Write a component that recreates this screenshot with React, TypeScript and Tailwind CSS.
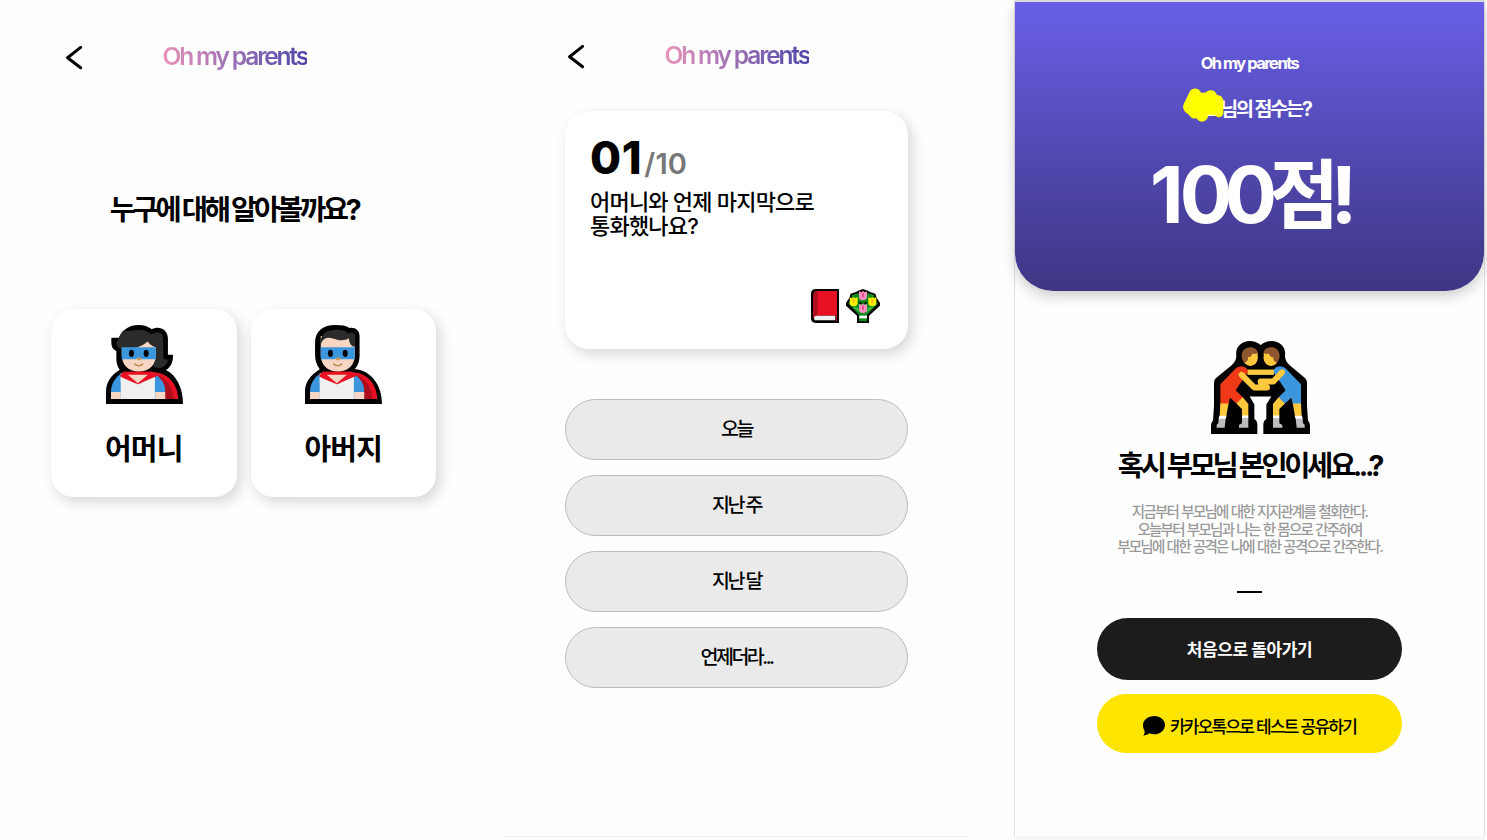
import type { ReactNode } from "react";

function BackIcon() {
  return (
    <svg className="h-6 w-[18px]" viewBox="0 0 18 24" fill="none" stroke="#000" strokeWidth="3" strokeLinecap="round" strokeLinejoin="round">
      <path d="M15.6 1.4 2.6 11.7 15.6 21.8" />
    </svg>
  );
}

function HeroBody() {
  return (
    <g>
      <path fill="#3b96dd" d="M63 267v-22c0-24 12-43 33-56h96c20 12 34 30 34 56v22z" />
      <path fill="#f7d7c4" d="M63 246h29v21H63zM195 246h31v21h-31z" />
      <path fill="#f0f0f0" d="M92 190h102v77H92z" />
      <path fill="#e81123" d="M188 186c42 2 74 33 76 81h-38v-22c0-24-12-40-38-59z" />
      <path fill="#ae0d1b" d="M200 194c28 12 49 36 50 73h-24v-22c0-22-9-36-26-51z" />
      <path fill="#e81123" d="M103 185h82l16 11-9 9-49 18-43-16-10-9z" />
      <path fill="#f0f0f0" d="m92 201 50 22 52-24v20H92z" />
      <path fill="#e81123" d="M100 185h88l12 13-57 25-53-27z" />
      <path fill="#f7d7c4" d="M113 194h60l-30 26z" />
    </g>
  );
}

function HeroFace() {
  return (
    <g>
      <path fill="#3b96dd" d="M95 112h102v36h-38c-5 0-5-5-12-5s-8 5-13 5H95z" />
      <ellipse cx="124" cy="130" rx="7.5" ry="11" />
      <ellipse cx="168" cy="130" rx="7.5" ry="11" />
      <path fill="#c9965c" d="M139 146c2-5 14-5 16 0-3 6-13 6-16 0z" />
      <path d="M134 162c6 7 17 7 23 0" fill="none" stroke="#c08c55" strokeWidth="5" strokeLinecap="round" />
    </g>
  );
}

function MotherIcon() {
  return (
    <svg className="ml-px h-[79px] w-[77px]" viewBox="48 45 230 237" preserveAspectRatio="none">
      <path d="M48 282v-37c0-27 14-49 41-66-6-8-10-20-10-30v-26c-11-4-15-14-15-26V83h22c12-25 33-38 59-38 16 0 29 4 40 13 20-12 48 0 48 28v48h15v6c0 17-8 33-21 40 32 16 51 54 51 102z" />
      <path fill="#2b2b2b" d="M79 98h17c8-27 26-39 50-39 17 0 30 6 38 16 8-13 35-12 35 11v54c0 6 4 9 14 9-2 15-14 25-28 25-11 0-16-5-20-9L95 118z" />
      <path fill="#f7d7c4" d="M95 112h10c25 1 51-7 68-18 4 8 13 14 24 17v22c0 31-18 52-51 52s-51-21-51-52z" />
      <path fill="#2b2b2b" d="M79 98c2 13 10 20 25 20 28 0 52-8 69-24 5 9 13 15 24 18l8-26-40-24H98z" />
      <HeroFace />
      <HeroBody />
    </svg>
  );
}

function FatherIcon() {
  return (
    <svg className="ml-px h-[79px] w-[77px]" viewBox="48 45 230 237" preserveAspectRatio="none">
      <path d="M48 282v-37c0-27 14-48 44-67-9-13-14-26-14-45V98c0-35 24-53 61-53 19 0 32 2 42 9 16-3 30 7 30 24v56c0 19-4 31-14 43 50 5 81 50 81 105z" />
      <path fill="#f7d7c4" d="M95 78h102v55c0 31-18 52-51 52s-51-21-51-52z" />
      <path fill="#2b2b2b" d="M93 112c-3-34 14-53 48-53 17 0 29 2 37 13 9-9 20-3 20 8v31c-12-2-17-8-19-26-12 7-24 7-35 4-13-4-27-9-37-3-8 5-12 14-14 26z" />
      <HeroFace />
      <HeroBody />
    </svg>
  );
}

function BookIcon() {
  return (
    <svg className="h-[34px] w-[28px]" viewBox="0 0 84 102">
      <path d="M14 0h70v102H14C5 102 0 97 0 88V14C0 5 5 0 14 0z" />
      <path fill="#ae0d1b" d="M18 6h6v76c-10 0-14 2-18 7V18C6 10 10 6 18 6z" />
      <path fill="#e81123" d="M20 6h58v74H20z" />
      <path fill="#f0f0f0" d="M16 80h57v14H15c-8 0-8-14 1-14z" />
      <path fill="#ae0d1b" d="M74 80h4v16h-4z" />
    </svg>
  );
}

function Tulip({ x, y, light, dark }: { x: number; y: number; light: string; dark: string }) {
  return (
    <g transform={`translate(${x} ${y})`}>
      <path fill={light} d="M0 1l7 3 5-4 5 4 7-3v15c0 8-4 12-12 12S0 24 0 16z" />
      <path fill={dark} d="M9 8c0-4 6-4 6 0v8c0 4-6 4-6 0z" />
    </g>
  );
}

function BouquetIcon() {
  return (
    <svg className="h-[34px] w-[34px]" viewBox="0 0 102 102">
      <path d="M36 5 51 0l15 5 6 4 16 5 4 12 10 16v8L69 80v22H33V80L0 50v-8l10-16 4-12 16-5z" />
      <path fill="#0f8a1d" d="m18 18 18-5h30l18 5 2 10 9 16-32 33v20H39V77L7 44l9-16z" />
      <path fill="#3fb742" d="M40 70 19 53l14 2 10 12zM62 70l21-17-14 2-10 12z" />
      <path d="m36 38 15 4 15-4-6 7-9-3-9 3z" />
      <Tulip x={39} y={6} light="#ff8fc0" dark="#e4508e" />
      <Tulip x={11} y={24} light="#fff000" dark="#ffb900" />
      <Tulip x={67} y={24} light="#fff000" dark="#ffb900" />
      <Tulip x={39} y={44} light="#ff8fc0" dark="#e4508e" />
      <path fill="#fff" d="M40 80h23v8H40z" />
    </svg>
  );
}

function Wrestler({ suit }: { suit: string }) {
  return (
    <g>
      <ellipse cx="136" cy="68" rx="22" ry="22" fill="#ffc83d" />
      <path fill="#ffc83d" d="M128 50h30v18h-30z" />
      <path fill="#8e562e" d="M111 68c-5-24 11-34 25-34 12 0 22 7 22 17-4 3-10 4-16 2-1 7-6 11-13 11 1 7-1 11-8 16-6-3-9-7-10-12z" />
      <path fill="#ffc83d" d="M46 202h25l-7 39H44zM94 203l18-20 18 22v36h-19v-21z" />
      <path fill={suit} d="M46 203v-58l46-47c8-7 17-7 26-5 7 2 11 8 10 16l-36 54 21 21-19 19-19-17-4 17z" />
      <path fill="#fff" d="M43 240h22l-3 10H41zM111 239h19v10h-19z" />
      <path fill="#bdbdc1" d="M41 249h21l-3 27H35v-9l5-4zM111 248h19v28h-28v-8l9-5z" />
    </g>
  );
}

function WrestlersIcon() {
  return (
    <svg className="h-[93px] w-[99px]" viewBox="18 15 297 280" preserveAspectRatio="none">
      <path d="M18 295v-23c0-8 2-13 6-18l3-44v-68c0-8 3-13 8-17l44-36c10-9 15-17 15-30-4-26 16-44 40-44 13 0 23 4 33 12 10-8 20-12 33-12 24 0 44 18 40 44 0 13 5 21 15 30l43 36c5 4 8 9 8 17v68l3 44c4 5 6 10 6 18v23H175v-28c0-8 3-13 9-17v-44l15-24h-65l14 24v44c6 4 9 9 9 17v28z" />
      <Wrestler suit="#f03a17" />
      <g transform="translate(334 0) scale(-1 1)">
        <Wrestler suit="#3b96dd" />
      </g>
      <path fill="#ffc83d" d="M127 101h80v16h-80z" />
      <g fill="none" strokeLinecap="round" strokeLinejoin="round">
        <path d="m110 117 38 38h38" stroke="#ffc83d" strokeWidth="18" />
        <path d="m231 109-26 28h-38" stroke="#ffc83d" strokeWidth="18" />
      </g>
      <path fill="#ffc83d" d="M160 140h30v12h-30z" />
      <path fill="#f03a17" d="m112 92 16 12-1 8-9-6-10 1z" />
      <path fill="#3b96dd" d="m222 92-16 12 1 8 14-10 12-2z" />
    </svg>
  );
}

function TalkIcon() {
  return (
    <svg className="h-[20px] w-[22px]" viewBox="0 0 66 60">
      <path d="M34 0c18 0 32 12 32 27S52 55 34 55c-6 0-11-1-15-3-5 4-11 6-18 7 3-4 4-8 4-14-3-5-5-11-5-18C0 12 15 0 34 0z" />
    </svg>
  );
}

function Scribble() {
  return (
    <svg className="absolute left-0 -top-[5px] h-[34px] w-[41px]" viewBox="534 266 123 102">
      <path
        fill="#ff0"
        d="M555 275c7-10 27-11 33 5 6 1 10 1 16-2 9-8 26-7 32 9 15 1 21 13 19 24v31c-2 13-15 15-23 8-8-3-14-4-22-2-3 22-27 25-35 9-13 3-19-4-25-12-19-12-19-25-9-41z"
      />
      <path fill="#fffbd0" d="M608 346h22v4h-22z" />
    </svg>
  );
}

function ScreenHeader() {
  return (
    <header className="flex h-6 items-center">
      <div className="flex w-[97.5px] shrink-0">
        <BackIcon />
      </div>
      <span className="-mt-[4px] bg-linear-to-r from-[#e992b9] to-[#4f45a9] bg-clip-text text-[24.5px] leading-[32px] font-semibold tracking-[-2.15px] whitespace-nowrap text-transparent">
        Oh my parents
      </span>
    </header>
  );
}

function ParentCard({ icon, label }: { icon: ReactNode; label: string }) {
  return (
    <button className="flex h-[188px] w-[185.5px] flex-col items-center rounded-[22px] bg-white pt-4 shadow-[4px_5px_14px_rgba(0,0,0,0.16)]">
      {icon}
      <span className="mt-[25px] text-[29px] leading-[42px] font-bold tracking-[-0.9px]">{label}</span>
    </button>
  );
}

const answers = ["오늘", "지난 주", "지난 달", "언제더라..."];

export default function App() {
  return (
    <div className="flex h-[840px] w-[1487px] overflow-hidden bg-[#fefefe] font-['Inter','Noto_Sans_CJK_KR',sans-serif] text-black">
      <section className="flex w-[502px] shrink-0 flex-col pt-[46px]">
        <div className="pl-[65px]">
          <ScreenHeader />
        </div>
        <h1 className="mt-[120px] w-[470px] pr-[2px] text-center text-[28.5px] leading-[40px] font-bold tracking-[-3.3px] whitespace-nowrap">
          누구에 대해 알아볼까요?
        </h1>
        <div className="mt-[79px] flex gap-[14px] pl-[51px]">
          <ParentCard icon={<MotherIcon />} label="어머니" />
          <ParentCard icon={<FatherIcon />} label="아버지" />
        </div>
      </section>

      <section className="mr-[46px] flex h-[837px] w-[466px] shrink-0 flex-col border-b border-[#f0f0f0] pt-[45px]">
        <div className="pl-[65px]">
          <ScreenHeader />
        </div>
        <div className="mt-[42px] ml-[63px] flex h-[238px] w-[343px] flex-col rounded-3xl bg-white pt-[25px] pr-7 pb-[26px] pl-[25px] shadow-[4px_5px_14px_rgba(0,0,0,0.16)]">
          <div className="flex h-[48px] items-baseline leading-[44px]">
            <span className="text-[45px] font-extrabold tracking-[0.6px]">01</span>
            <span className="ml-[2px] text-[29px] font-semibold tracking-[0.2px] text-[#777]">/10</span>
          </div>
          <p className="mt-[6px] text-[22px] leading-6 font-medium tracking-[-0.8px] whitespace-nowrap">
            어머니와 언제 마지막으로
            <br />
            통화했나요?
          </p>
          <div className="mt-auto flex justify-end gap-[7px]">
            <BookIcon />
            <BouquetIcon />
          </div>
        </div>
        <div className="mt-[50px] ml-[63px] flex w-[343px] flex-col gap-[15px]">
          {answers.map((answer) => (
            <button key={answer} className="h-[61px] rounded-full border border-[#bdbdbd] bg-[#eaeaea] text-[19.5px] font-medium tracking-[-2.5px]">
              {answer}
            </button>
          ))}
        </div>
      </section>

      <div className="h-[840px] w-[471px] shrink-0 bg-[#f6f6f6]">
        <section className="flex h-[836px] flex-col items-center border border-t-2 border-b-0 border-[#e0e0e0] bg-[#fefefe]">
          <div className="flex h-[289px] w-full shrink-0 flex-col items-center rounded-b-[38px] bg-linear-to-b from-[#695fe7] to-[#3e3684] text-white shadow-[0_5px_14px_rgba(0,0,0,0.2)]">
            <div className="mt-[49px] text-[16.5px] leading-6 font-bold tracking-[-1.5px]">Oh my parents</div>
            <div className="relative mt-[18px] flex pr-[5px] pl-[37px] text-[19.5px] leading-8 font-bold tracking-[-2.1px] whitespace-nowrap">
              <Scribble />
              님의 점수는?
            </div>
            <div className="mt-[20px] flex h-[100px] items-baseline pl-[3px] text-[78px] leading-[100px] font-bold whitespace-nowrap">
              <span className="tracking-[-4px]">1</span>
              <span className="tracking-[-7.8px]">00</span>
              <span className="text-[76px] tracking-[-8.5px]">점</span>
              <span className="tracking-[-5px]">!</span>
            </div>
          </div>
          <div className="mt-[50px] pl-[21px]">
            <WrestlersIcon />
          </div>
          <h2 className="mt-[12px] text-[28.5px] leading-[40px] font-bold tracking-[-3.4px] whitespace-nowrap">
            혹시 부모님 본인이세요...?
          </h2>
          <p className="mt-[17px] text-center text-[14.5px] leading-[17.5px] font-medium tracking-[-1.75px] [word-spacing:1px] whitespace-nowrap text-[#999]">
            지금부터 부모님에 대한 지지관계를 철회한다.
            <br />
            오늘부터 부모님과 나는 한 몸으로 간주하여
            <br />
            부모님에 대한 공격은 나에 대한 공격으로 간주한다.
          </p>
          <div className="mt-[35px] h-[2px] w-[25px] bg-black" />
          <button className="mt-[25px] h-[62px] w-[305px] rounded-full bg-[#1c1c1c] pt-[4px] text-[17px] font-bold tracking-[-0.4px] text-white">
            처음으로 돌아가기
          </button>
          <button className="mt-[14px] flex h-[59px] w-[305px] items-center justify-center gap-[5px] rounded-full bg-[#fee500] pt-[5px] text-[17px] font-medium tracking-[-1.75px]">
            <TalkIcon />
            <span className="pt-[4px]">카카오톡으로 테스트 공유하기</span>
          </button>
        </section>
      </div>
    </div>
  );
}
